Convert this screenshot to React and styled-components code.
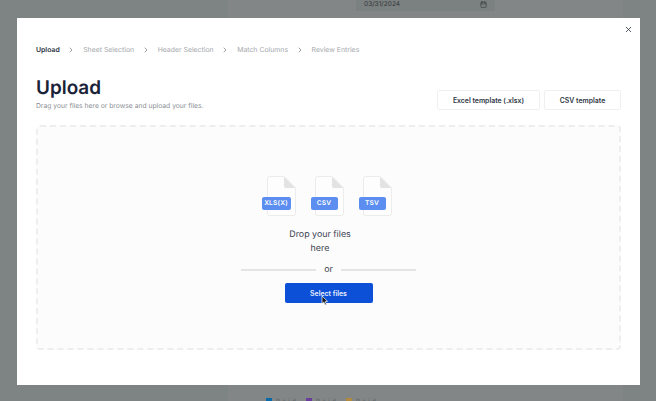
import React from 'react';
import styled, { createGlobalStyle } from 'styled-components';
import { X, Calendar, ChevronRight } from 'lucide-react';

const GlobalStyle = createGlobalStyle`
  html, body {
    margin: 0;
    padding: 0;
    height: 100%;
    overflow: hidden;
    font-family: Inter, "Liberation Sans", sans-serif;
    text-rendering: geometricPrecision;
  }
`;

const Page = styled.div`
  position: relative;
  width: 656px;
  height: 401px;
  overflow: hidden;
  background: #7e8383;
  opacity: 0.999;
`;

const BackColumn = styled.div`
  width: 395px;
  margin-left: 228px;
  height: 100%;
  background: #828686;
  display: flex;
  flex-direction: column;
  justify-content: space-between;
  align-items: flex-start;
`;

const DateField = styled.div`
  width: 139px;
  height: 11px;
  margin-left: 128px;
  background: #7b8080;
  display: flex;
  align-items: center;
  justify-content: space-between;
  padding: 0 8px 3px 8px;
  box-sizing: border-box;
  font-size: 6.6px;
  color: #33383c;
  white-space: nowrap;
`;

const Legend = styled.div`
  display: flex;
  margin-left: 38px;
  height: 3px;
  overflow: hidden;
`;

const LegendItem = styled.div`
  width: 40px;
  display: flex;
  gap: 4px;
`;

const Swatch = styled.span`
  width: 6px;
  height: 3px;
  background: ${(p) => p.$color};
`;

const LegendLabel = styled.span`
  padding-top: 1px;
  font-size: 6px;
  line-height: 6px;
  letter-spacing: 2.5px;
  color: #5a5f62;
`;

const Dialog = styled.div`
  position: absolute;
  left: 17px;
  top: 18px;
  width: 623px;
  height: 367px;
  box-sizing: border-box;
  background: #fff;
  padding: 25px 19px 0;
`;

const CloseButton = styled.button`
  position: absolute;
  top: 5px;
  right: 6px;
  width: 12px;
  height: 12px;
  padding: 0;
  border: 0;
  background: none;
  color: #2f3542;
  display: flex;
  align-items: center;
  justify-content: center;
`;

const Steps = styled.div`
  display: flex;
  align-items: center;
  height: 12px;
  margin-top: 1px;
`;

const Step = styled.span`
  font-size: 6.9px;
  line-height: 12px;
  font-weight: ${(p) => (p.$active ? 600 : 400)};
  color: ${(p) => (p.$active ? '#2a3342' : '#a5a8ad')};
  white-space: nowrap;
`;

const StepArrow = styled.span`
  width: 23.5px;
  display: flex;
  justify-content: center;
  color: #6b6f76;
`;

const Header = styled.div`
  display: flex;
  justify-content: space-between;
  align-items: flex-end;
  margin-top: 20px;
`;

const Title = styled.h1`
  margin: 0;
  font-size: 18.9px;
  line-height: 24px;
  font-weight: 600;
  color: #1a2238;
`;

const Subtitle = styled.p`
  margin: 0;
  font-size: 6.75px;
  line-height: 12px;
  color: #8b8f95;
`;

const Templates = styled.div`
  display: flex;
  gap: 4px;
  margin-bottom: 2px;
`;

const TemplateButton = styled.button`
  height: 20px;
  width: ${(p) => p.$width}px;
  padding: 0;
  background: #fff;
  border: 1px solid #f0f0f1;
  border-radius: 2px;
  font-family: inherit;
  font-size: 6.9px;
  font-weight: 600;
  color: #2f3746;
`;

const DropZone = styled.div`
  height: 225px;
  margin-top: 13px;
  box-sizing: border-box;
  border: 2px dashed #eeeeef;
  border-radius: 4px;
  background: #fcfcfc;
  display: flex;
  flex-direction: column;
  align-items: center;
  padding-top: 49px;
`;

const Files = styled.div`
  display: flex;
  gap: 19px;
  margin-left: 1px;
`;

const FileIcon = styled.div`
  position: relative;
  width: 29px;
  height: 40px;
`;

const FileBadge = styled.span`
  position: absolute;
  left: ${(p) => p.$left}px;
  top: 21px;
  width: ${(p) => p.$width}px;
  height: 13px;
  border-radius: 2px;
  background: #5b8ef0;
  color: #fff;
  font-size: 6.6px;
  font-weight: 600;
  line-height: 13px;
  text-align: center;
  letter-spacing: 0.2px;
`;

const DropText = styled.div`
  width: 70px;
  margin: 12px 0 0 -17px;
  font-size: 8.9px;
  line-height: 14px;
  text-align: center;
  color: #3b4252;
`;

const OrRow = styled.div`
  display: flex;
  align-items: center;
  gap: 8px;
  margin-top: 7px;
  font-size: 8.9px;
  line-height: 14px;
  color: #3b4252;
`;

const Rule = styled.span`
  width: 75px;
  height: 2px;
  background: #e3e4e4;
`;

const SelectButton = styled.button`
  position: relative;
  width: 88px;
  height: 20px;
  margin-top: 6px;
  padding: 0;
  border: 0;
  border-radius: 2px;
  background: #0b50d6;
  color: #e8efff;
  font-family: inherit;
  font-size: 6.9px;
  font-weight: 600;
`;

const Pointer = styled.svg`
  position: absolute;
  left: 36px;
  top: 12px;
`;

const files = [
  { label: 'XLS(X)', left: -5, width: 29 },
  { label: 'CSV', left: -4, width: 27 },
  { label: 'TSV', left: -4, width: 27 },
];

const steps = ['Upload', 'Sheet Selection', 'Header Selection', 'Match Columns', 'Review Entries'];

const legend = ['#0a6aa8', '#6a3d9a', '#b08a3e'];

const FileShape = () => (
  <svg width="29" height="40" viewBox="0 0 29 40">
    <path d="M0.5 2.5 a2 2 0 0 1 2-2 H17 L28.5 12 V37.5 a2 2 0 0 1-2 2 H2.5 a2 2 0 0 1-2-2 Z" fill="#fdfdfd" stroke="#ececec" />
    <path d="M17 0.5 L28.5 12 H19 a2 2 0 0 1-2-2 Z" fill="#e3e3e3" />
  </svg>
);

export default function App() {
  return (
    <Page>
      <GlobalStyle />
      <BackColumn>
        <DateField>
          03/31/2024
          <Calendar size={7} strokeWidth={2} />
        </DateField>
        <Legend>
          {legend.map((color) => (
            <LegendItem key={color}>
              <Swatch $color={color} />
              <LegendLabel>Paid</LegendLabel>
            </LegendItem>
          ))}
        </Legend>
      </BackColumn>
      <Dialog>
        <CloseButton aria-label="Close">
          <X size={9} strokeWidth={2.2} />
        </CloseButton>
        <Steps>
          {steps.map((step, i) => (
            <React.Fragment key={step}>
              {i > 0 && (
                <StepArrow>
                  <ChevronRight size={8} strokeWidth={2} />
                </StepArrow>
              )}
              <Step $active={i === 0}>{step}</Step>
            </React.Fragment>
          ))}
        </Steps>
        <Header>
          <div>
            <Title>Upload</Title>
            <Subtitle>Drag your files here or browse and upload your files.</Subtitle>
          </div>
          <Templates>
            <TemplateButton $width={103}>Excel template (.xlsx)</TemplateButton>
            <TemplateButton $width={77}>CSV template</TemplateButton>
          </Templates>
        </Header>
        <DropZone>
          <Files>
            {files.map((f) => (
              <FileIcon key={f.label}>
                <FileShape />
                <FileBadge $left={f.left} $width={f.width}>{f.label}</FileBadge>
              </FileIcon>
            ))}
          </Files>
          <DropText>Drop your files here</DropText>
          <OrRow>
            <Rule />
            or
            <Rule />
          </OrRow>
          <SelectButton>
            Select files
            <Pointer width="8" height="11" viewBox="0 0 8 11">
              <path d="M1 1 V8.5 L2.8 7 L4 10 L5.4 9.4 L4.2 6.6 L6.6 6.4 Z" fill="#1a1a1a" stroke="#fff" strokeWidth="0.7" />
            </Pointer>
          </SelectButton>
        </DropZone>
      </Dialog>
    </Page>
  );
}
